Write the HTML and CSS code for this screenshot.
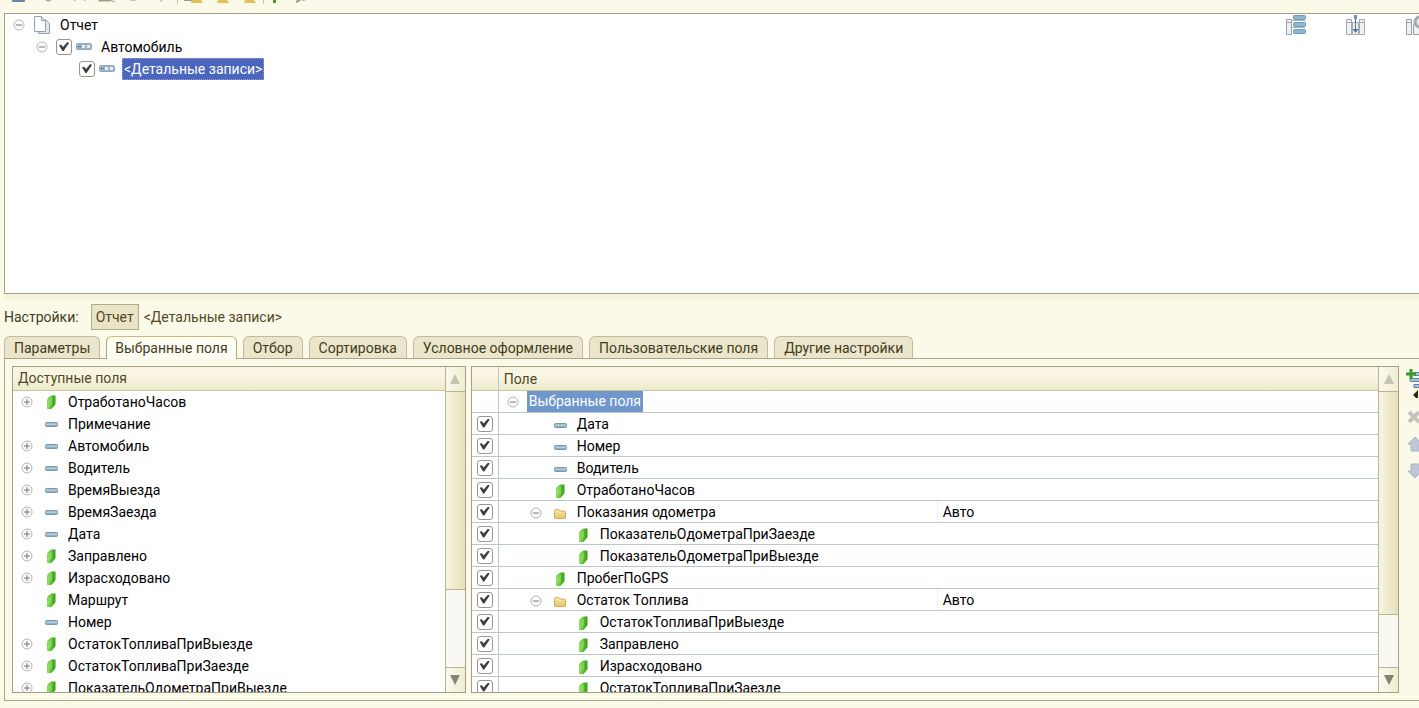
FILE: index.html
```
<!DOCTYPE html>
<html lang="ru">
<head>
<meta charset="utf-8">
<title>Настройки отчета</title>
<link rel="stylesheet" href="styles.css">
</head>
<body>
<svg class="defs" aria-hidden="true">
  <defs>
    <linearGradient id="gGreen" x1="0" x2="1"><stop offset="0" stop-color="#8fdc62"/><stop offset=".5" stop-color="#5cc030"/><stop offset="1" stop-color="#379a1c"/></linearGradient>
    <linearGradient id="gBlue" x1="0" x2="0" y1="0" y2="1"><stop offset="0" stop-color="#7c9db2"/><stop offset=".45" stop-color="#bcd6e3"/><stop offset="1" stop-color="#6b8da4"/></linearGradient>
    <linearGradient id="gFolder" x1="0" x2="0" y1="0" y2="1"><stop offset="0" stop-color="#f9eaae"/><stop offset="1" stop-color="#e6c768"/></linearGradient>
  </defs>
  <symbol id="plus" viewBox="0 0 12 12"><circle cx="6" cy="6" r="5" fill="#fbfbfb" stroke="#b4b4b4"/><path d="M3 6h6M6 3v6" stroke="#777"/></symbol>
  <symbol id="minus" viewBox="0 0 12 12"><circle cx="6" cy="6" r="5" fill="#fbfbfb" stroke="#b4b4b4"/><path d="M3 6h6" stroke="#777"/></symbol>
  <symbol id="res" viewBox="0 0 16 16"><path d="M4 6q0-1.500 1.500-2.500L8.500 1.500H12.500v8q0 1-1 2L8.500 15H4z" fill="url(#gGreen)"/><path d="M5 6 9 2.500v7.500L5 14z" fill="#a8ea80" opacity=".4"/></symbol>
  <symbol id="dim" viewBox="0 0 16 16"><rect x="2.500" y="6.500" width="12" height="4" rx="1" fill="url(#gBlue)" stroke="#7c99ab"/></symbol>
  <symbol id="folder" viewBox="0 0 16 16"><path d="M2.500 5.500q0-1 1-1h3l1.500 1.500h4.500q1 0 1 1v5.500q0 1-1 1h-9q-1 0-1-1z" fill="url(#gFolder)" stroke="#cfac58"/></symbol>
  <symbol id="group" viewBox="0 0 18 10"><rect x="1.500" y="1.500" width="15" height="6" rx="1" fill="#9db4c6" stroke="#93a9bb"/><path d="M3 4.500h3" stroke="#5b7890"/><rect x="7" y="3" width="3" height="3" fill="#e6eff6"/><rect x="12" y="3" width="3" height="3" fill="#e6eff6"/></symbol>
  <symbol id="pages" viewBox="0 0 18 20"><path d="M5.500 4.500h7l4 4v10h-11z" fill="#dfe5ea" stroke="#94a1ae"/><path d="M1.500 1.500h7l4 4v11h-11z" fill="#fff" stroke="#94a1ae"/><path d="M8.500 1.500v4h4" fill="#dce4ea" stroke="#94a1ae"/></symbol>
</svg>

<div class="window">
  <div class="toolbar">
    <svg class="toolstrip" viewBox="0 0 330 6" aria-hidden="true">
      <path d="M12 0h13v1q0 1-1 1H13q-1 0-1-1z" fill="#6d86a0"/>
      <path d="M45 0h7l-4 2zM73 0h3l-1 1zM83 0h3l-1 1z" fill="#b9aaa0"/>
      <path d="M99 0h11v1H99zM110 0l5 2" fill="#9aa3a8" stroke="#9a9a90"/>
      <path d="M129 0h8l-2 1h-4zM159 0h4l-2 2z" fill="#c9c6b4"/>
      <path d="M177.500 0v4M263.500 0v4" stroke="#c9c5a5"/>
      <path d="M184 0h8v1h-8z" fill="#8b9dac"/>
      <path d="M192 0h9l2 3h-12zM218 0h9l2 3h-12zM245 0h9l2 3h-12z" fill="#e6bf55"/>
      <path d="M273 0h3v3h-3z" fill="#43962f"/>
      <path d="M296 2l4-2" stroke="#a39494" stroke-width="2"/>
      <path d="M300 0h6l-2 1z" fill="#b7a7b2"/>
    </svg>
  </div>

  <main class="structure">
    <ul class="tree">
      <li class="node"><svg class="toggle"><use href="#minus"/></svg><svg class="pages"><use href="#pages"/></svg><span class="name">Отчет</span></li>
      <li class="node level-1"><svg class="toggle"><use href="#minus"/></svg><input class="check" type="checkbox" id="car" checked><svg class="group"><use href="#group"/></svg><label class="name" for="car">Автомобиль</label></li>
      <li class="node level-2"><input class="check" type="checkbox" id="det" checked><svg class="group"><use href="#group"/></svg><label class="name chosen" for="det">&lt;Детальные записи&gt;</label></li>
    </ul>
    <div class="views">
      <button class="icon-button" aria-label="Строки"><svg width="20" height="20"><path d="M.5 4.500h5v15h-5zM.5 7.500h5" fill="#edf0f2" stroke="#9ba3aa"/><path d="M6 5.500h13M6 12.500h13" stroke="#a9b4bb"/><g fill="#8fb5cf" stroke="#6f98b5"><rect x="7.500" y=".5" width="12" height="4" rx="1"/><rect x="7.500" y="7.500" width="12" height="4" rx="1"/><rect x="7.500" y="14.500" width="12" height="4" rx="1"/></g></svg></button>
      <button class="icon-button" aria-label="Колонки"><svg width="20" height="20"><path d="M.5 4.500h5v15h-5zM13.500 4.500h5v15h-5zM6.500 7.500h6v12h-6zM.5 7.500h5M13.500 7.500h5" fill="#f0f1f2" stroke="#a5a9ad"/><path d="M9.500 4v12M8 0l3 2-3 2M11 0L8 2l3 2" fill="none" stroke="#4b78ac"/><path d="M6.500 14h6l-3 4z" fill="#4b78ac"/></svg></button>
      <button class="icon-button" aria-label="Настройка"><svg width="20" height="20"><path d="M.5 4.500h5v15h-5zM7.500 9.500h11v10h-11zM.5 7.500h5" fill="#f0f1f2" stroke="#9a9fa3"/><circle cx="14" cy="7" r="5" fill="#e3e5e6" stroke="#a4a8ab" stroke-width="3"/></svg></button>
    </div>
  </main>

  <div class="splitter"></div>

  <nav class="path">
    <span>Настройки:</span>
    <button class="crumb pressed">Отчет</button>
    <button class="crumb">&lt;Детальные записи&gt;</button>
  </nav>

  <div class="tabs" role="tablist">
    <button class="tab" role="tab">Параметры</button>
    <button class="tab active" role="tab" aria-selected="true">Выбранные поля</button>
    <button class="tab" role="tab">Отбор</button>
    <button class="tab" role="tab">Сортировка</button>
    <button class="tab" role="tab">Условное оформление</button>
    <button class="tab" role="tab">Пользовательские поля</button>
    <button class="tab" role="tab">Другие настройки</button>
  </div>

  <section class="page">
    <div class="panel available">
      <div class="content">
        <h2 class="head">Доступные поля</h2>
        <ul class="fields">
          <li class="field"><svg class="toggle"><use href="#plus"/></svg><svg class="kind"><use href="#res"/></svg>ОтработаноЧасов</li>
          <li class="field leaf"><svg class="kind"><use href="#dim"/></svg>Примечание</li>
          <li class="field"><svg class="toggle"><use href="#plus"/></svg><svg class="kind"><use href="#dim"/></svg>Автомобиль</li>
          <li class="field"><svg class="toggle"><use href="#plus"/></svg><svg class="kind"><use href="#dim"/></svg>Водитель</li>
          <li class="field"><svg class="toggle"><use href="#plus"/></svg><svg class="kind"><use href="#dim"/></svg>ВремяВыезда</li>
          <li class="field"><svg class="toggle"><use href="#plus"/></svg><svg class="kind"><use href="#dim"/></svg>ВремяЗаезда</li>
          <li class="field"><svg class="toggle"><use href="#plus"/></svg><svg class="kind"><use href="#dim"/></svg>Дата</li>
          <li class="field"><svg class="toggle"><use href="#plus"/></svg><svg class="kind"><use href="#res"/></svg>Заправлено</li>
          <li class="field"><svg class="toggle"><use href="#plus"/></svg><svg class="kind"><use href="#res"/></svg>Израсходовано</li>
          <li class="field leaf"><svg class="kind"><use href="#res"/></svg>Маршрут</li>
          <li class="field leaf"><svg class="kind"><use href="#dim"/></svg>Номер</li>
          <li class="field"><svg class="toggle"><use href="#plus"/></svg><svg class="kind"><use href="#res"/></svg>ОстатокТопливаПриВыезде</li>
          <li class="field"><svg class="toggle"><use href="#plus"/></svg><svg class="kind"><use href="#res"/></svg>ОстатокТопливаПриЗаезде</li>
          <li class="field"><svg class="toggle"><use href="#plus"/></svg><svg class="kind"><use href="#res"/></svg>ПоказательОдометраПриВыезде</li>
        </ul>
      </div>
      <div class="scroll">
        <button class="arrow" aria-label="Вверх"><svg width="10" height="10"><path d="M5 0l5 10H0z" fill="#c6c4ae"/></svg></button>
        <div class="track"><div class="thumb thumb-left"></div></div>
        <button class="arrow down" aria-label="Вниз"><svg width="10" height="10"><path d="M0 0h10L5 10z" fill="#858475"/></svg></button>
      </div>
    </div>

    <div class="panel selected">
      <div class="content">
        <table class="grid">
          <colgroup><col class="col-check"><col class="col-field"><col></colgroup>
          <thead><tr><th></th><th colspan="2">Поле</th></tr></thead>
          <tbody>
            <tr><td></td><td><div class="cell root"><svg class="toggle"><use href="#minus"/></svg><span class="current">Выбранные поля</span></div></td><td></td></tr>
            <tr><td><input class="check" type="checkbox" id="f1" checked></td><td><label class="cell" for="f1"><svg class="kind"><use href="#dim"/></svg>Дата</label></td><td></td></tr>
            <tr><td><input class="check" type="checkbox" id="f2" checked></td><td><label class="cell" for="f2"><svg class="kind"><use href="#dim"/></svg>Номер</label></td><td></td></tr>
            <tr><td><input class="check" type="checkbox" id="f3" checked></td><td><label class="cell" for="f3"><svg class="kind"><use href="#dim"/></svg>Водитель</label></td><td></td></tr>
            <tr><td><input class="check" type="checkbox" id="f4" checked></td><td><label class="cell" for="f4"><svg class="kind"><use href="#res"/></svg>ОтработаноЧасов</label></td><td></td></tr>
            <tr class="split"><td><input class="check" type="checkbox" id="f5" checked></td><td><label class="cell branch" for="f5"><svg class="toggle"><use href="#minus"/></svg><svg class="kind"><use href="#folder"/></svg>Показания одометра</label></td><td>Авто</td></tr>
            <tr><td><input class="check" type="checkbox" id="f6" checked></td><td><label class="cell deep" for="f6"><svg class="kind"><use href="#res"/></svg>ПоказательОдометраПриЗаезде</label></td><td></td></tr>
            <tr><td><input class="check" type="checkbox" id="f7" checked></td><td><label class="cell deep" for="f7"><svg class="kind"><use href="#res"/></svg>ПоказательОдометраПриВыезде</label></td><td></td></tr>
            <tr><td><input class="check" type="checkbox" id="f8" checked></td><td><label class="cell" for="f8"><svg class="kind"><use href="#res"/></svg>ПробегПоGPS</label></td><td></td></tr>
            <tr class="split"><td><input class="check" type="checkbox" id="f9" checked></td><td><label class="cell branch" for="f9"><svg class="toggle"><use href="#minus"/></svg><svg class="kind"><use href="#folder"/></svg>Остаток Топлива</label></td><td>Авто</td></tr>
            <tr><td><input class="check" type="checkbox" id="f10" checked></td><td><label class="cell deep" for="f10"><svg class="kind"><use href="#res"/></svg>ОстатокТопливаПриВыезде</label></td><td></td></tr>
            <tr><td><input class="check" type="checkbox" id="f11" checked></td><td><label class="cell deep" for="f11"><svg class="kind"><use href="#res"/></svg>Заправлено</label></td><td></td></tr>
            <tr><td><input class="check" type="checkbox" id="f12" checked></td><td><label class="cell deep" for="f12"><svg class="kind"><use href="#res"/></svg>Израсходовано</label></td><td></td></tr>
            <tr><td><input class="check" type="checkbox" id="f13" checked></td><td><label class="cell deep" for="f13"><svg class="kind"><use href="#res"/></svg>ОстатокТопливаПриЗаезде</label></td><td></td></tr>
          </tbody>
        </table>
      </div>
      <div class="scroll">
        <button class="arrow" aria-label="Вверх"><svg width="10" height="10"><path d="M5 0l5 10H0z" fill="#c6c4ae"/></svg></button>
        <div class="track"><div class="thumb thumb-right"></div></div>
        <button class="arrow down" aria-label="Вниз"><svg width="10" height="10"><path d="M0 0h10L5 10z" fill="#858475"/></svg></button>
      </div>
    </div>

    <div class="side">
      <button class="icon-button" aria-label="Добавить"><svg width="20" height="32"><g fill="#a9c3d8" stroke="#5f84a5"><rect x="8" y="6.500" width="14" height="3"/><rect x="4" y="12.500" width="18" height="3" rx="1"/><rect x="8" y="18.500" width="14" height="3"/></g><path d="M0 8h10M5 3v10" stroke="#369a2b" stroke-width="3"/><path d="M7 29l5-5v10z" fill="#33290a"/></svg></button>
      <button class="icon-button" aria-label="Удалить"><svg width="20" height="16"><path d="M3 3l10 10M13 3L3 13" stroke="#c4c4c0" stroke-width="4"/></svg></button>
      <button class="icon-button" aria-label="Вверх"><svg width="20" height="16"><path d="M2 8l7-7 7 7h-3v7H5V8z" fill="#bcc8d8" stroke="#abb7c8"/></svg></button>
      <button class="icon-button" aria-label="Вниз"><svg width="20" height="16"><path d="M2 8l7 7 7-7h-3V1H5v7z" fill="#bcc8d8" stroke="#abb7c8"/></svg></button>
    </div>
  </section>
</div>
</body>
</html>
```
FILE: styles.css
```
* { box-sizing: border-box; }

body {
  margin: 0;
  background: #fbfae8;
  color: #000;
  font: 14px/22px Roboto, "Liberation Sans", sans-serif;
}

button { font: inherit; color: inherit; cursor: pointer; }
ul { list-style: none; margin: 0; padding: 0; }
svg { display: block; flex: none; }
.defs { position: absolute; width: 0; height: 0; }

.window {
  display: flex;
  flex-direction: column;
  height: 100vh;
  padding: 0 0 7px 4px;
  overflow: hidden;
}

.toolbar { flex: none; height: 13px; margin-left: -4px; }
.toolstrip { width: 330px; height: 6px; }

/* Report structure */
.structure {
  display: flex;
  justify-content: space-between;
  flex: 279 0 0;
  background: #fff;
  border: 1px solid #a5a083;
  border-right: 0;
}
.node { display: flex; align-items: center; height: 22px; padding-left: 8px; }
.level-1 { padding-left: 31px; }
.level-2 { padding-left: 74px; }
.toggle { width: 12px; height: 12px; }
.pages { width: 18px; height: 20px; margin: 0 7px 0 8px; }
.group { width: 18px; height: 10px; margin: 0 6px 0 3px; }
.level-1 .toggle { margin-right: 8px; }
.name { padding: 0 2px; }
.chosen { background: #4c66bd; color: #fff; outline: 1px dotted #8fa0e0; outline-offset: -1px; }

.check {
  appearance: none;
  display: block;
  flex: none;
  width: 16px;
  height: 16px;
  margin: 0;
  background: #fff;
  border: 1px solid #9a978a;
  border-radius: 3px;
}
.check:checked::before {
  content: "";
  display: block;
  width: 10px;
  height: 9px;
  margin: 2px;
  background: #3d3d3d;
  clip-path: polygon(0 36%, 22% 30%, 40% 56%, 84% 0, 100% 10%, 46% 100%, 34% 100%);
}

.icon-button { display: block; padding: 0; border: 0; background: none; }
.views { display: flex; align-items: flex-start; gap: 40px; margin-right: -7px; padding-top: 1px; }

.splitter { flex: none; height: 6px; background: #f5f3dc; }

/* Settings path */
.path {
  display: flex;
  align-items: center;
  flex: none;
  height: 26px;
  margin-top: 4px;
  color: #423c1c;
}
.crumb { height: 26px; padding: 0 4px; border: 1px solid transparent; background: none; color: #51481f; }
.pressed { margin-left: 12px; background: #e9e4c6; border-color: #b0aa87; }

/* Tabs */
.tabs { display: flex; gap: 6px; flex: none; margin-top: 6px; }
.tab {
  height: 22px;
  padding: 0 9px;
  background: #ebe6cb;
  border: 1px solid #bfbb9c;
  border-bottom: 0;
  border-radius: 6px 6px 0 0;
  color: #423c1c;
  line-height: 20px;
}
.active { z-index: 1; height: 23px; margin-bottom: -1px; padding: 0 8px 1px; background: #fefdf3; border-color: #a9a585; border-top-color: #d3b878; }

.page {
  display: flex;
  flex: 327 0 0;
  min-height: 0;
  padding: 7px 0 7px 7px;
  border: 1px solid #a9a585;
  border-right: 0;
}
.panel { display: flex; min-width: 0; background: #fff; border: 1px solid #a5a083; }
.available { flex: 453 0 0; margin-right: 5px; }
.selected { flex: 929 0 0; }
.content { flex: 1; min-width: 0; overflow: hidden; }

.head, .grid th {
  height: 24px;
  background: linear-gradient(#f8f6e3, #f8f6e3 40%, #eeeaca);
  border-bottom: 1px solid #c9c4a0;
  color: #51481f;
  font-size: 14px;
  font-weight: 400;
  text-align: left;
}
.head { margin: 0; padding-left: 5px; }
.field { display: flex; align-items: center; height: 22px; padding-left: 8px; white-space: nowrap; }
.leaf { padding-left: 20px; }
.kind { width: 16px; height: 16px; margin: 0 9px 0 10px; }

.grid { width: 100%; table-layout: fixed; border-collapse: separate; border-spacing: 0; }
.col-check { width: 27px; }
.col-field { width: 439px; }
.grid th { padding: 0 5px; }
.grid td { height: 22px; padding: 2px 5px 0; border-bottom: 1px solid #bfc6c8; line-height: 19px; }
.grid th:first-child, .grid td:first-child { border-right: 1px solid #bfc6c8; }
.grid td:first-child { padding: 0 5px; }
.grid td:nth-child(2) { padding: 0; }
.split td:nth-child(2) { border-right: 1px solid #eef0f1; }
.cell { display: flex; align-items: center; height: 21px; padding: 2px 0 0 43px; white-space: nowrap; }
.root { padding: 0 0 0 8px; }
.branch { padding-left: 31px; }
.deep { padding-left: 66px; }
.current { margin-left: 8px; padding: 1px 2px; background: #7097cb; color: #fff; }

/* Scroll bars */
.scroll { display: flex; flex-direction: column; flex: none; width: 20px; border-left: 1px solid #b9b593; background: #f9f8f2; }
.arrow {
  display: flex;
  align-items: center;
  justify-content: center;
  flex: none;
  height: 25px;
  padding: 0;
  border: 0;
  border-bottom: 1px solid #b9b593;
  background: linear-gradient(90deg, #faf9ec, #f0edd3);
}
.down { border-top: 1px solid #b9b593; border-bottom: 0; }
.track { flex: 1; }
.thumb { background: linear-gradient(90deg, #f7f5e0, #e5dfba); border-bottom: 1px solid #b9b593; }
.thumb-left { height: 72%; }
.thumb-right { height: 81%; }

.side { display: flex; flex-direction: column; gap: 11px; flex: none; width: 20px; margin-left: 7px; margin-right: -7px; }
```
